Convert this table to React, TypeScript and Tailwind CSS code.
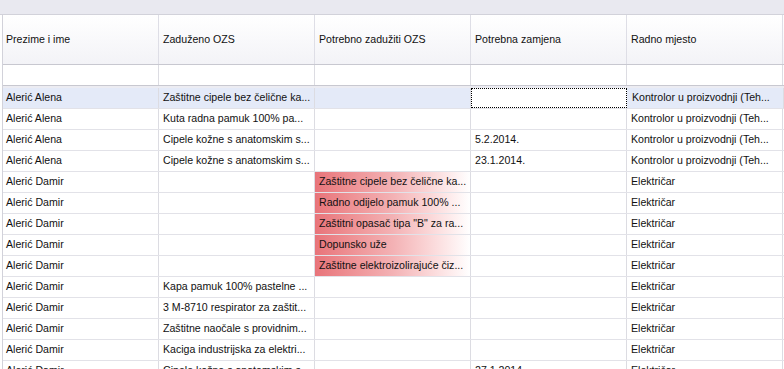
import React from "react";

type Row = {
  name: string;
  issued: string;
  needed: string;
  replace: string;
  place: string;
};

const KONTROLOR = "Kontrolor u proizvodnji (Teh...";

const rows: Row[] = [
  { name: "Alerić Alena", issued: "Zaštitne cipele bez čelične ka...", needed: "", replace: "", place: KONTROLOR },
  { name: "Alerić Alena", issued: "Kuta radna pamuk 100% pa...", needed: "", replace: "", place: KONTROLOR },
  { name: "Alerić Alena", issued: "Cipele kožne s anatomskim s...", needed: "", replace: "5.2.2014.", place: KONTROLOR },
  { name: "Alerić Alena", issued: "Cipele kožne s anatomskim s...", needed: "", replace: "23.1.2014.", place: KONTROLOR },
  { name: "Alerić Damir", issued: "", needed: "Zaštitne cipele bez čelične ka...", replace: "", place: "Električar" },
  { name: "Alerić Damir", issued: "", needed: "Radno odijelo pamuk 100% ...", replace: "", place: "Električar" },
  { name: "Alerić Damir", issued: "", needed: "Zaštitni opasač tipa \"B\" za ra...", replace: "", place: "Električar" },
  { name: "Alerić Damir", issued: "", needed: "Dopunsko uže", replace: "", place: "Električar" },
  { name: "Alerić Damir", issued: "", needed: "Zaštitne elektroizolirajuće čiz...", replace: "", place: "Električar" },
  { name: "Alerić Damir", issued: "Kapa pamuk 100% pastelne ...", needed: "", replace: "", place: "Električar" },
  { name: "Alerić Damir", issued: "3 M-8710 respirator za zaštit...", needed: "", replace: "", place: "Električar" },
  { name: "Alerić Damir", issued: "Zaštitne naočale s providnim...", needed: "", replace: "", place: "Električar" },
  { name: "Alerić Damir", issued: "Kaciga industrijska za elektri...", needed: "", replace: "", place: "Električar" },
  { name: "Alerić Damir", issued: "Cipele kožne s anatomskim s...", needed: "", replace: "27.1.2014.", place: "Električar" },
];

const headers = ["Prezime i ime", "Zaduženo OZS", "Potrebno zadužiti OZS", "Potrebna zamjena", "Radno mjesto"];

function Cell({ children, className = "" }: { children?: React.ReactNode; className?: string }) {
  return (
    <div className={`w-[156px] shrink-0 h-full border-r border-[#dcdce2] flex items-center pl-[4px] first:pl-[3px] overflow-hidden whitespace-nowrap ${className}`}>
      {children}
    </div>
  );
}

export default function App() {
  return (
    <div className="w-[784px] h-[369px] overflow-hidden bg-white text-[10.6px] text-[#111]" style={{ fontFamily: '"Liberation Sans", Arial, sans-serif' }}>
      <div className="h-[15px] bg-[#e9e9f0] border-b border-[#d2d2da]" />

      <div className="ml-[2px] border-l border-[#d2d2da]">
        {/* header */}
        <div className="flex h-[50px] border-b border-[#c8c8d0] bg-gradient-to-b from-white to-[#f3f3f7]">
          {headers.map((h) => (
            <Cell key={h} className="border-[#dedee6]">{h}</Cell>
          ))}
        </div>

        {/* filter row */}
        <div className="flex h-[21px] border-b border-[#c8c8d0]">
          {headers.map((h) => (
            <Cell key={h} />
          ))}
        </div>
        <div className="h-[2px] bg-[#ececf2]" />

        {rows.map((r, i) => {
          const selected = i === 0;
          return (
            <div key={i} className={`flex h-[21px] border-b border-[#e2e2e8] ${selected ? "bg-[#e4eaf8]" : ""}`}>
              <Cell>{r.name}</Cell>
              <Cell>{r.issued}</Cell>
              <Cell className={r.needed ? "bg-gradient-to-r from-[#e8747a] via-[#f3b1b4] to-white" : ""}>
                {r.needed}
              </Cell>
              <Cell className={selected ? "bg-white !border-0 outline outline-1 outline-dotted outline-black -outline-offset-1 mr-[1px]" : ""}>
                {r.replace}
              </Cell>
              <Cell>{r.place}</Cell>
            </div>
          );
        })}
      </div>
    </div>
  );
}
